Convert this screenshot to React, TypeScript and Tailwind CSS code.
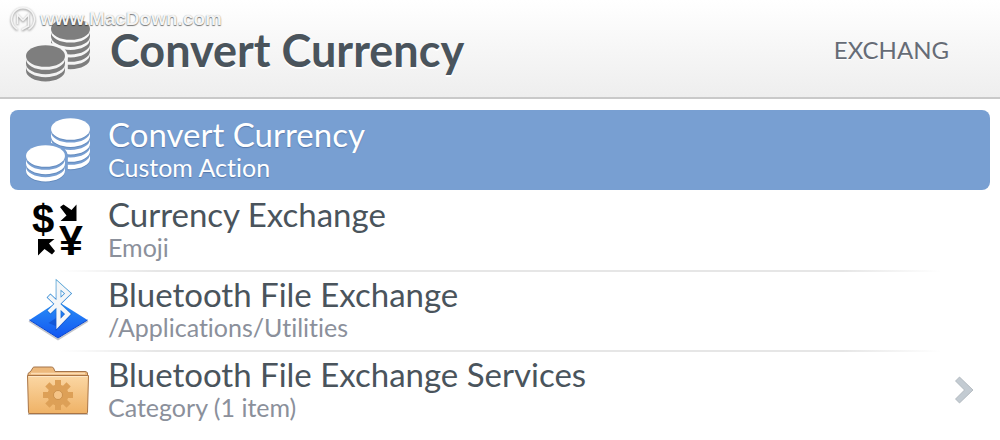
import { useState, type ReactNode } from "react";
import clsx from "clsx";

type ResultItem = {
    id: string;
    title: string;
    subtitle: string;
    icon: ReactNode;
    hasChildren?: boolean;
}

function CoinsIcon({ id, className }: { id: string; className?: string }) {
    return (
        <svg viewBox="0 0 64 64" className={clsx("size-16 shrink-0", className)} fill="currentColor" aria-hidden="true">
            <mask id={id}>
                <rect width="64" height="64" fill="white" />
                <ellipse cx="19.5" cy="38" rx="22.3" ry="13.3" fill="black" />
                <rect x="0" y="38" width="41.8" height="26" fill="black" />
            </mask>
            <g mask={`url(#${id})`}>
                <ellipse cx="44.5" cy="11" rx="19.5" ry="10.8" />
                <path d="M25 13.8a19.5 10.8 0 0 0 39 0v4.4a19.5 10.8 0 0 1-39 0z" />
                <path d="M25 21.2a19.5 10.8 0 0 0 39 0v4.4a19.5 10.8 0 0 1-39 0z" />
                <path d="M25 28.6a19.5 10.8 0 0 0 39 0v4.4a19.5 10.8 0 0 1-39 0z" />
                <path d="M25 36a19.5 10.8 0 0 0 39 0v4.4a19.5 10.8 0 0 1-39 0z" />
            </g>
            <ellipse cx="19.5" cy="38" rx="19.5" ry="10.8" />
            <path d="M0 41a19.5 10.8 0 0 0 39 0v4.4a19.5 10.8 0 0 1-39 0z" />
            <path d="M0 48.4a19.5 10.8 0 0 0 39 0v4.2a19.5 10.8 0 0 1-39 0z" />
        </svg>
    )
}

function CurrencyExchangeIcon() {
    return (
        <svg viewBox="0 0 64 64" className="size-16 shrink-0" fill="black" aria-hidden="true">
            <text x="6" y="35" fontSize="40" fontWeight="700" fontFamily="Liberation Sans, sans-serif">$</text>
            <text x="33" y="56.5" fontSize="43" fontWeight="700" fontFamily="Liberation Sans, sans-serif">¥</text>
            <path d="M34 9L37.500 6.500 45.500 12 50.500 6.500V23H34.500L40.500 17.500z" />
            <path d="M12 41H28.500L23 45.500 29 53 26 56.500 18.500 51 12 57.500z" />
        </svg>
    )
}

function BluetoothIcon() {
    return (
        <svg viewBox="0 0 64 64" className="size-16 shrink-0" aria-hidden="true">
            <defs>
                <linearGradient id="bt-base" x1="0" y1="0" x2="0" y2="1">
                    <stop offset="0" stopColor="#2a90f6" />
                    <stop offset="1" stopColor="#1256f2" />
                </linearGradient>
                <linearGradient id="bt-edge" x1="0" y1="0" x2="0" y2="1">
                    <stop offset="0" stopColor="#3f97cf" />
                    <stop offset="0.6" stopColor="#1a75d8" />
                    <stop offset="1" stopColor="#1550c8" />
                </linearGradient>
            </defs>
            <path d="M3 43L32 61.500l30-18.500" fill="none" stroke="#c3c5cb" strokeWidth="1.500" />
            <path d="M32 23.500L61.500 42 32 60 3.500 42z" fill="url(#bt-base)" />
            <path d="M3.500 42L32 60l29.500-18" fill="none" stroke="#0b46cf" strokeWidth="1" />
            <path d="M22.500 45l9-6 4-1-2 8-4 2z" fill="#0d48c4" opacity="0.6" />
            {/* outlined rune */}
            <g fill="none" strokeLinejoin="miter">
                <path d="M22.500 17.500L42 36 32.500 46V7L42 15.500 22.500 34.500" stroke="url(#bt-edge)" strokeWidth="5.600" />
                <path d="M23 18L42 36 32.500 46V7L42 15.500 23 34" stroke="#f4f6f8" strokeWidth="4.200" />
            </g>
        </svg>
    )
}

function FolderIcon() {
    return (
        <svg viewBox="0 0 64 64" className="size-16 shrink-0" aria-hidden="true">
            <defs>
                <linearGradient id="folder-front" x1="0" y1="0" x2="0" y2="1">
                    <stop offset="0" stopColor="#fbd7a4" />
                    <stop offset="1" stopColor="#efb266" />
                </linearGradient>
            </defs>
            <path d="M2 56h60" stroke="#c9c4c0" strokeWidth="2" />
            <path d="M2 20V15.500L5 13l2-3.500Q7.500 9 9 9h16.500Q27 9 27.500 10l1.500 3.500h30Q61 13.500 61.500 15v5z" fill="#edb97c" stroke="#a4744a" />
            <path d="M5 15.500h54" stroke="#fbdcb4" strokeWidth="1.500" />
            <path d="M1.500 17.500h61L61.500 54.500Q61.500 55.500 60 55.500H4Q2.500 55.500 2.500 54.500z" fill="url(#folder-front)" stroke="#a97445" />
            <path d="M2.500 18.500h59" stroke="#fde7c8" />
            <g transform="translate(32 37)" fill="#dda057">
                <path d="M-3-15h6v30h-6z" />
                <path d="M-3-15h6v30h-6z" transform="rotate(45)" />
                <path d="M-3-15h6v30h-6z" transform="rotate(90)" />
                <path d="M-3-15h6v30h-6z" transform="rotate(135)" />
                <circle r="10.500" />
                <circle r="4.500" fill="#f5c487" stroke="#bf8440" strokeWidth="0.700" />
            </g>
        </svg>
    )
}

function ChevronIcon() {
    return (
        <svg viewBox="0 0 20 28" className="h-7 w-5 shrink-0" aria-hidden="true">
            <path d="M5.500 1L19 14 5.500 27 1.500 23 10.500 14 1.500 5z" fill="#c3cbd2" stroke="#a9b1b8" strokeWidth="0.800" />
        </svg>
    )
}

function Watermark() {
    return (
        <div className="pointer-events-none absolute top-1.5 left-2.5 flex items-center gap-1 text-[#f4f4f4]">
            <svg viewBox="0 0 26 26" className="size-6.5 drop-shadow-[0_1px_1px_rgba(0,0,0,0.5)]" fill="none" stroke="currentColor" aria-hidden="true">
                <path d="M7.500 23.300A11.500 11.500 0 1 1 18.500 23.300" strokeWidth="1.500" />
                <path d="M7.500 18V8.500l5.500 6 5.500-6V20L12 23.500" strokeWidth="1.500" />
            </svg>
            <span className="font-['Liberation_Sans',sans-serif] text-[19px]/[24px] font-bold [text-shadow:0_1px_1px_rgba(0,0,0,0.5),0_0_1px_rgba(0,0,0,0.25)]">
                www.MacDown.com
            </span>
        </div>
    )
}

const results: ResultItem[] = [
    {
        id: "convert",
        title: "Convert Currency",
        subtitle: "Custom Action",
        icon: <CoinsIcon id="coins-row" className="drop-shadow-[0_1px_0_rgba(70,110,160,0.4)]" />,
    },
    {
        id: "emoji",
        title: "Currency Exchange",
        subtitle: "Emoji",
        icon: <CurrencyExchangeIcon />,
    },
    {
        id: "bluetooth",
        title: "Bluetooth File Exchange",
        subtitle: "/Applications/Utilities",
        icon: <BluetoothIcon />,
    },
    {
        id: "services",
        title: "Bluetooth File Exchange Services",
        subtitle: "Category (1 item)",
        icon: <FolderIcon />,
        hasChildren: true,
    },
]

export default function App() {
    const [query, setQuery] = useState("EXCHANG");
    const [selected, setSelected] = useState(0);

    return (
        <div className="min-h-screen bg-white font-[Lato,sans-serif] text-[#4a545c] [font-variant-ligatures:none]">
            <header className="relative flex items-center gap-5 border-b-2 border-[#c9c9c9] bg-linear-to-b from-white to-[#eeeeee] pt-[18px] pr-[51px] pb-[15px] pl-[26px]">
                <CoinsIcon id="coins-header" className="text-[#7e7e7e]" />
                <h1 className="flex-1 text-[45px]/[64px] font-bold [text-shadow:0_2px_0_#fff]">{results[selected].title}</h1>
                <input
                    type="text"
                    aria-label="Search"
                    value={query}
                    onChange={(e) => setQuery(e.target.value)}
                    className="w-60 bg-transparent text-right text-[24px]/[32px] text-[#666c76] outline-none [text-shadow:0_1px_0_#fff]"
                />
                <Watermark />
            </header>

            <main className="px-2.5 pt-[11px]">
                <ul>
                    {results.map((item, index) => {
                        const active = index === selected;

                        return (
                            <li key={item.id}>
                                {/* hairline fades out at both ends, skipped around the selected row */}
                                <div
                                    className={clsx(
                                        "-mb-0.5 h-0.5",
                                        index > 0 && !active && index - 1 !== selected &&
                                            "bg-[linear-gradient(to_right,transparent_5%,#e6e6e6_15%,#e6e6e6_85%,transparent_95%)]"
                                    )}
                                />
                                <button
                                    type="button"
                                    onClick={() => setSelected(index)}
                                    className={clsx(
                                        "flex h-20 w-full items-center gap-[18px] rounded-lg px-4 text-left",
                                        active && "bg-[#789fd2] text-white [text-shadow:0_1px_1px_rgba(50,80,130,0.5)]"
                                    )}
                                >
                                    {item.icon}
                                    <span className="flex min-w-0 flex-1 flex-col pb-1">
                                        <span className="truncate text-[33px]/[38px]">{item.title}</span>
                                        <span className={clsx("truncate text-[25px]/[28px]", !active && "text-[#8b909b]")}>
                                            {item.subtitle}
                                        </span>
                                    </span>
                                    {item.hasChildren && <ChevronIcon />}
                                </button>
                            </li>
                        )
                    })}
                </ul>
            </main>
        </div>
    )
}
